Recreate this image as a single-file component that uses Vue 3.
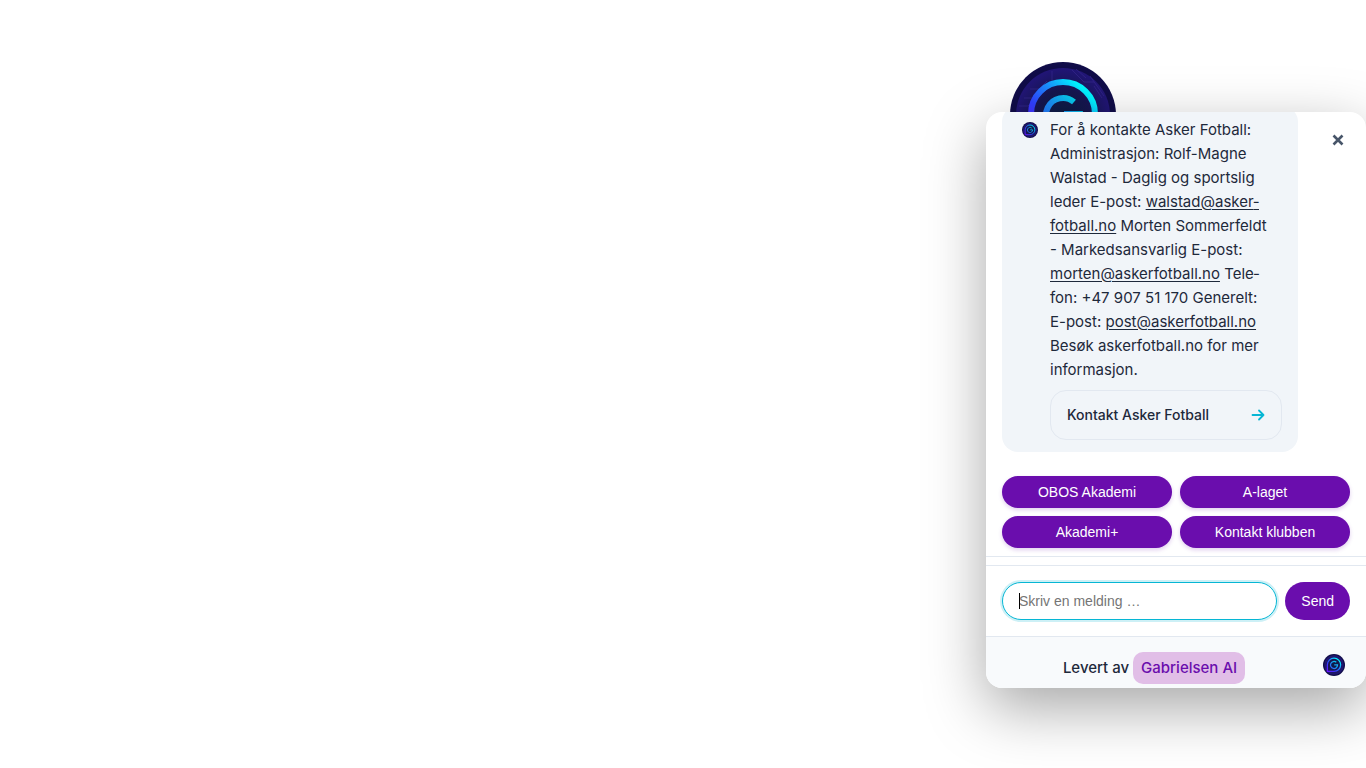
<script setup>
import { ref, onMounted } from 'vue'

const draft = ref('')
const field = ref(null)
const quickReplies = ['OBOS Akademi', 'A-laget', 'Akademi+', 'Kontakt klubben']

onMounted(() => field.value.focus())
</script>

<template>
  <main class="page">
    <svg width="0" height="0" class="defs" aria-hidden="true">
      <defs>
        <linearGradient id="stroke" x1="0" y1="1" x2="1" y2="0">
          <stop offset="0" stop-color="#6a10ff" />
          <stop offset="0.35" stop-color="#3040ff" />
          <stop offset="0.6" stop-color="#1a90ff" />
          <stop offset="0.85" stop-color="#00f4ff" />
        </linearGradient>
        <linearGradient id="letter" x1="0" y1="1" x2="1" y2="0">
          <stop offset="0" stop-color="#2a60ff" />
          <stop offset="0.5" stop-color="#1a90f5" />
          <stop offset="1" stop-color="#00e0e8" />
        </linearGradient>
        <radialGradient id="disc">
          <stop offset="0" stop-color="#0b1d44" />
          <stop offset="0.55" stop-color="#161650" />
          <stop offset="1" stop-color="#221678" />
        </radialGradient>
        <symbol id="logo" viewBox="0 0 106 106">
          <circle cx="53" cy="53" r="53" fill="#100c48" />
          <circle cx="53" cy="53" r="47" fill="url(#disc)" />
          <g fill="none" stroke="#3a2a92" stroke-width="1" opacity="0.6">
            <path d="M14 36h14l14-14V9M20 27h9l8-8M62 8l12 12h10M66 7l10 9M84 24l8 12M9 44h9l6-6M80 14l14 20" />
            <path d="M12 70l12 12v10M92 72L80 84v8M96 52h-8" />
          </g>
          <path
            d="M21 84V52a32 32 0 1 1 32 32H21z"
            fill="none" stroke="url(#stroke)" stroke-width="6" stroke-linejoin="round"
          />
          <path
            d="M64 40a17 17 0 1 0 6 12H54"
            fill="none" stroke="url(#letter)" stroke-width="6"
          />
        </symbol>
      </defs>
    </svg>

    <button class="launcher" type="button" aria-label="Chat">
      <svg class="launcher-logo"><use href="#logo" /></svg>
    </button>

    <section class="panel">
      <button class="close" type="button" aria-label="Lukk">
        <svg viewBox="0 0 12 12" width="12" height="12">
          <path d="M1.500 1.500l9 9M10.500 1.500l-9 9" stroke="currentColor" stroke-width="2.600" />
        </svg>
      </button>

      <div class="messages">
        <article class="bubble">
          <span class="avatar"><svg width="16" height="16"><use href="#logo" /></svg></span>
          <div class="content">
            <p class="text">
              For å kontakte Asker Fotball: Administrasjon: Rolf-Magne Walstad - Daglig og sportslig
              leder E-post: <a href="mailto:walstad@askerfotball.no">walstad@asker&shy;fotball.no</a>
              Morten Sommerfeldt - Markedsansvarlig E-post:
              <a href="mailto:morten@askerfotball.no">morten@askerfotball.no</a>
              Tele&shy;fon: +47 907 51 170 Generelt: E-post:
              <a href="mailto:post@askerfotball.no">post@askerfotball.no</a>
              Besøk askerfotball.no for mer informasjon.
            </p>
            <a class="card" href="#kontakt">
              <span>Kontakt Asker Fotball</span>
              <svg viewBox="0 0 14 14" width="14" height="14">
                <path
                  d="M1.500 7h11M8 2.500L12.500 7 8 11.500"
                  fill="none" stroke="#06b6d4" stroke-width="1.800"
                  stroke-linecap="round" stroke-linejoin="round"
                />
              </svg>
            </a>
          </div>
        </article>
      </div>

      <div class="quick">
        <button v-for="label in quickReplies" :key="label" type="button">{{ label }}</button>
      </div>

      <form class="composer" @submit.prevent>
        <div class="field">
          <input ref="field" v-model="draft" type="text" placeholder="Skriv en melding …" aria-label="Skriv en melding" />
          <span v-if="!draft" class="caret"></span>
        </div>
        <button type="submit">Send</button>
      </form>

      <footer class="footer">
        <p>Levert av <a href="#gabrielsen">Gabrielsen AI</a></p>
        <span class="mark"><svg width="22" height="22"><use href="#logo" /></svg></span>
      </footer>
    </section>
  </main>
</template>

<style>
body {
  background: #fff;
}
</style>

<style scoped>
* {
  box-sizing: border-box;
}

.page {
  display: flex;
  flex-direction: column;
  align-items: flex-end;
  justify-content: flex-end;
  min-height: 100vh;
  padding-bottom: 80px;
  overflow: hidden;
  font: 15px/24px Inter, "Liberation Sans", sans-serif;
  color: #1e293b;
}

.defs {
  position: absolute;
}

button {
  border: 0;
  cursor: pointer;
}

.launcher {
  width: 106px;
  height: 106px;
  margin: 0 250px -56px 0;
  padding: 0;
  border-radius: 50%;
  background: none;
}

.launcher-logo {
  display: block;
  width: 100%;
  height: 100%;
}

.panel {
  position: relative;
  display: flex;
  flex-direction: column;
  width: 380px;
  max-width: 100%;
  height: 75vh;
  border-radius: 16px;
  overflow: hidden;
  background: #fff;
  box-shadow: 0 20px 60px rgba(0, 0, 0, 0.35);
}

.close {
  position: absolute;
  top: 16px;
  right: 16px;
  display: grid;
  place-items: center;
  width: 24px;
  height: 24px;
  padding: 0;
  background: none;
  color: #475569;
}

.messages {
  display: flex;
  flex: 1;
  flex-direction: column;
  justify-content: flex-end;
  min-height: 0;
  padding: 0 16px 24px;
}

.bubble {
  display: flex;
  gap: 8px;
  width: 85%;
  padding: 12px 16px;
  border-radius: 16px;
  background: #f1f5f9;
}

.avatar {
  display: grid;
  flex: none;
  place-items: center;
  width: 24px;
  height: 24px;
}

.content {
  flex: 1;
  min-width: 0;
}

.text {
  margin: 0 0 8px;
  padding-right: 8px;
}

.text a {
  color: inherit;
  text-underline-offset: 2px;
}

.card {
  display: flex;
  align-items: center;
  justify-content: space-between;
  height: 50px;
  padding: 0 16px;
  border: 1px solid #e2e8f0;
  border-radius: 16px;
  color: #1e293b;
  font-size: 14px;
  font-weight: 500;
  text-decoration: none;
}

.quick {
  display: grid;
  grid-template-columns: 1fr 1fr;
  gap: 8px;
  padding: 0 16px 8px;
  border-bottom: 1px solid #e2e8f0;
}

.quick button,
.composer button {
  border-radius: 20px;
  background: #6a0dad;
  color: #fff;
  font: 14px/16px "Liberation Sans", Arial, sans-serif;
}

.quick button {
  height: 32px;
  box-shadow: 0 2px 4px rgba(106, 13, 173, 0.2);
}

.composer {
  display: flex;
  gap: 8px;
  margin-top: 8px;
  padding: 16px;
  border-top: 1px solid #e2e8f0;
}

.field {
  position: relative;
  display: flex;
  flex: 1;
  min-width: 0;
}

.field input {
  flex: 1;
  min-width: 0;
  height: 38px;
  padding: 0 16px;
  border: 1px solid #06b6d4;
  border-radius: 20px;
  outline: none;
  background: #fff;
  box-shadow: 0 0 0 2px rgba(6, 182, 212, 0.2);
  caret-color: transparent;
  font: 14px/20px "Liberation Sans", Arial, sans-serif;
}

.field input:not(:placeholder-shown) {
  caret-color: auto;
}

.field input::placeholder {
  color: #757575;
}

.caret {
  position: absolute;
  top: 11px;
  left: 17px;
  width: 1px;
  height: 16px;
  background: #000;
  pointer-events: none;
}

.composer button {
  padding: 0 16px;
}

.footer {
  display: flex;
  gap: 12px;
  padding: 12px 16px 4px;
  border-top: 1px solid #e2e8f0;
  background: #f8fafc;
}

.footer p {
  flex: 1;
  margin: 0;
  padding: 7px 0 4px;
  text-align: center;
  font-weight: 500;
}

.footer a {
  display: inline-block;
  margin: -4px 0;
  padding: 4px 8px;
  border-radius: 10px;
  background: #e1bee7;
  color: #6a0dad;
  text-decoration: none;
}

.mark {
  display: grid;
  place-items: center;
  width: 32px;
  height: 32px;
}
</style>
